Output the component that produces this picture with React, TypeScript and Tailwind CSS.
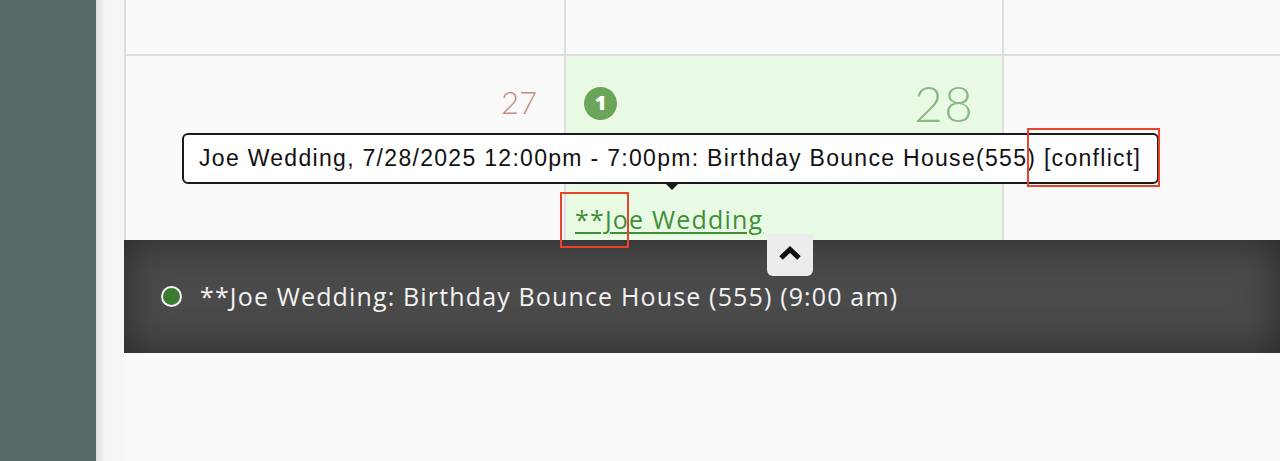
const body = "font-['Open_Sans',sans-serif]";

function Caret() {
  return (
    <svg width="24" height="16" viewBox="0 0 24 16" fill="none">
      <polyline points="3,13 12,4.5 21,13" stroke="#111" strokeWidth="5" strokeLinejoin="miter" />
    </svg>
  );
}

export default function App() {
  return (
    <div className={`relative flex h-[461px] w-[1280px] overflow-hidden bg-[#f9f9f9] ${body}`}>
      {/* sidebar */}
      <aside className="w-[96px] shrink-0 bg-[#566b68]" />
      <div className="w-[28px] shrink-0 bg-linear-to-r from-[#dedede] via-[#f3f3f3] via-30% to-[#f6f6f6]" />

      <main className="flex flex-1 flex-col">
        {/* calendar */}
        <div className="grid grid-cols-[440px_438px_1fr] border-l-2 border-[#dedede]">
          <div className="h-[56px] border-b-2 border-r-2 border-[#dedede]" />
          <div className="h-[56px] border-b-2 border-r-2 border-[#dedede]" />
          <div className="h-[56px] border-b-2 border-[#dedede]" />

          <div className="h-[184px] border-r-2 border-[#dedede] pr-[27px] pt-[31px] text-right">
            <span className="font-['Lato',sans-serif] text-[31px] font-light leading-none text-[#c48c83]">27</span>
          </div>
          <div className="flex h-[184px] flex-col border-r-2 border-[#dedede] bg-[#e8fae4] pl-[9px] pr-[28px]">
            <div className="mt-[22px] flex items-center justify-between">
              <span className="ml-[9px] flex h-[33px] w-[33px] items-center justify-center rounded-full bg-[#6aa55a] text-[20px] font-extrabold leading-none text-white">
                1
              </span>
              <span className="font-['Lato',sans-serif] text-[50px] font-light leading-none tracking-[1px] text-[#8cb886]">28</span>
            </div>
            <a
              href="#"
              className="mt-[79px] self-start text-[25px] leading-none tracking-[1.2px] text-[#3f8f36] underline decoration-2 underline-offset-[3px]"
            >
              **Joe Wedding
            </a>
          </div>
          <div className="h-[184px]" />
        </div>

        {/* agenda bar */}
        <div className="relative flex h-[113px] items-center bg-[#4a4a4a] pl-[37px] shadow-[inset_0_0_40px_rgba(0,0,0,0.45)]">
          <button className="absolute left-[643px] top-[-6px] flex h-[42px] w-[46px] items-center justify-center rounded-b-md bg-[#ececec] pb-[4px]">
            <Caret />
          </button>
          <span className="h-[21px] w-[21px] rounded-full border-2 border-[#f2f2f2] bg-[#3a7b2f]" />
          <span className="ml-[18px] text-[25px] leading-none tracking-[1.15px] text-[#f2f2f2]">
            **Joe Wedding: Birthday Bounce House (555) (9:00 am)
          </span>
        </div>
      </main>

      {/* tooltip */}
      <div className="absolute left-[182px] top-[133px] flex h-[51px] w-[977px] items-center rounded-md border-2 border-[#1a1a1a] bg-white pl-[15px] font-['Liberation_Sans',Arial,sans-serif] text-[23px] tracking-[1.3px] text-[#111]">
        Joe Wedding, 7/28/2025 12:00pm - 7:00pm: Birthday Bounce House(555) [conflict]
        <span className="absolute left-[480px] top-full h-0 w-0 border-x-[8px] border-t-[8px] border-x-transparent border-t-[#1a1a1a]" />
      </div>

      {/* annotation boxes */}
      <div className="absolute left-[1027px] top-[128px] h-[59px] w-[133px] border-2 border-[#e8432d]" />
      <div className="absolute left-[560px] top-[192px] h-[56px] w-[69px] border-2 border-[#e8432d]" />
    </div>
  );
}
